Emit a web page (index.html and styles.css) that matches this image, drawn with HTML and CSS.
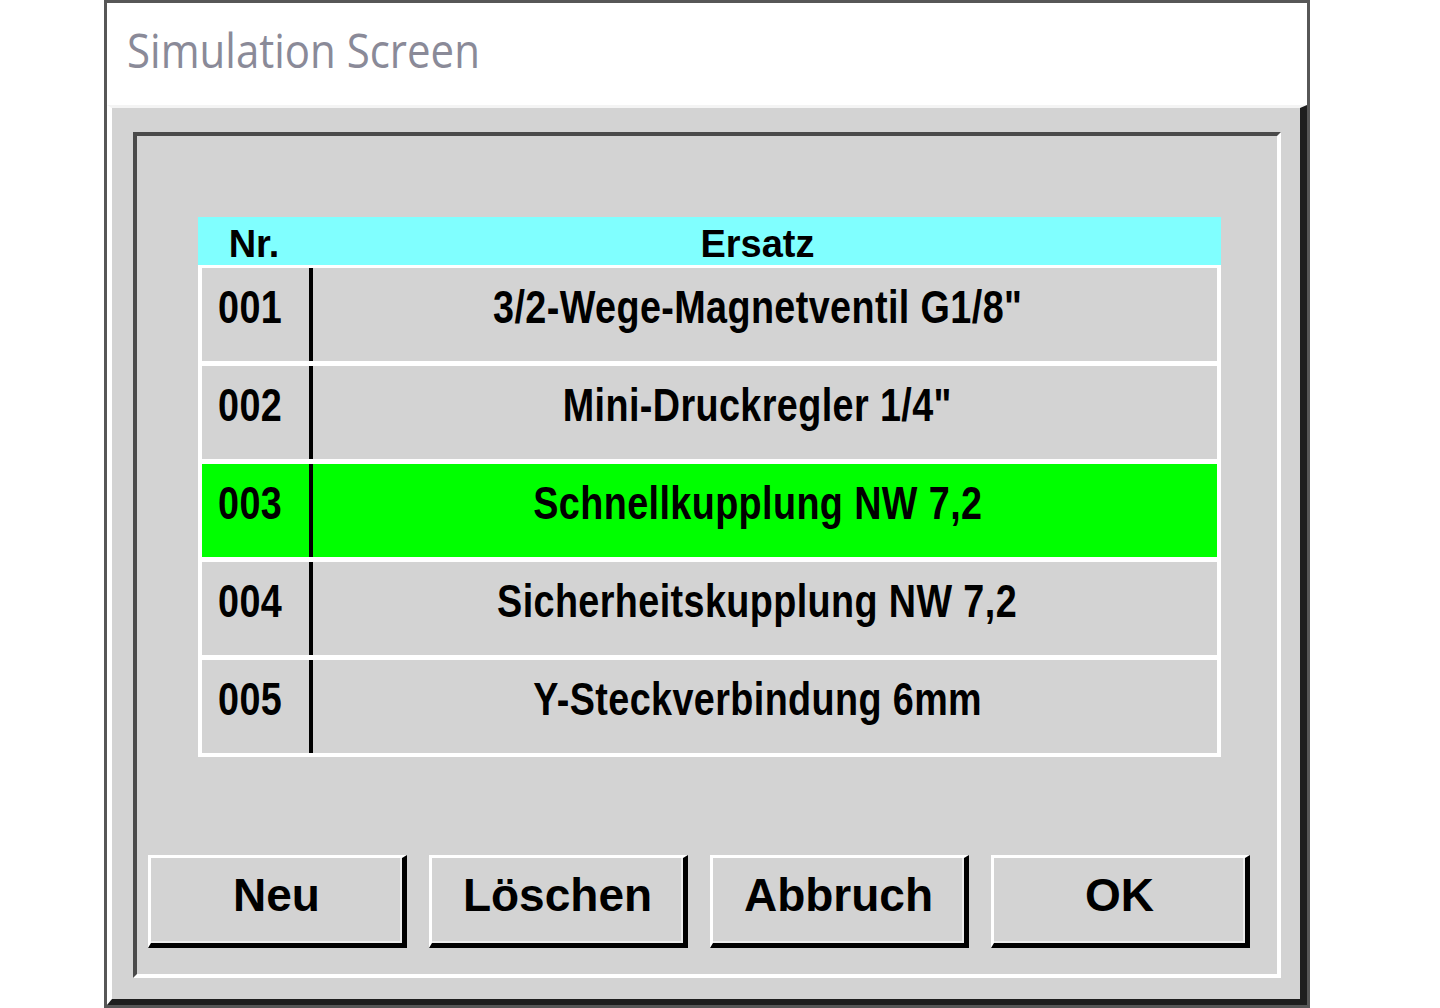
FILE: index.html
```html
<!DOCTYPE html>
<html lang="de">
<head>
    <meta charset="UTF-8">
    <meta name="viewport" content="width=device-width, initial-scale=1.0">
    <title>Simulation Screen</title>
    <link rel="stylesheet" href="styles.css">
</head>
<body>
    <div class="window">
        <div class="titlebar">
            <span class="title">Simulation Screen</span>
        </div>

        <div class="frame">
            <div class="panel">
                <!-- Ersatzteil-Liste -->
                <div class="table">
                    <div class="table-head">
                        <div class="col-nr">Nr.</div>
                        <div class="col-name">Ersatz</div>
                    </div>
                    <div class="rows">
                        <div class="row">
                            <div class="col-nr"><span class="cond">001</span></div>
                            <div class="col-name"><span class="cond">3/2-Wege-Magnetventil G1/8"</span></div>
                        </div>
                        <div class="row">
                            <div class="col-nr"><span class="cond">002</span></div>
                            <div class="col-name"><span class="cond">Mini-Druckregler 1/4"</span></div>
                        </div>
                        <div class="row selected">
                            <div class="col-nr"><span class="cond">003</span></div>
                            <div class="col-name"><span class="cond">Schnellkupplung NW 7,2</span></div>
                        </div>
                        <div class="row">
                            <div class="col-nr"><span class="cond">004</span></div>
                            <div class="col-name"><span class="cond">Sicherheitskupplung NW 7,2</span></div>
                        </div>
                        <div class="row">
                            <div class="col-nr"><span class="cond">005</span></div>
                            <div class="col-name"><span class="cond">Y-Steckverbindung 6mm</span></div>
                        </div>
                    </div>
                </div>

                <!-- Buttons -->
                <div class="buttons">
                    <button class="btn">Neu</button>
                    <button class="btn">Löschen</button>
                    <button class="btn">Abbruch</button>
                    <button class="btn">OK</button>
                </div>
            </div>
        </div>
    </div>
</body>
</html>
```

FILE: styles.css
```css
/* Simulation screen dialog */
body {
    margin: 0;
    padding: 0;
    background: #fff;
    font-family: "Liberation Sans", Arial, sans-serif;
}
.window {
    margin-left: 104px;
    width: 1200px;
    border: 3px solid #575757;
    background: #fff;
}
.titlebar {
    height: 102px;
    padding-left: 20px;
    padding-top: 10px;
    box-sizing: border-box;
}
.title {
    display: inline-block;
    font-family: "Open Sans", "Noto Sans", sans-serif;
    font-size: 42px;
    line-height: 84px;
    color: #8a8a98;
    transform: scaleY(1.12);
    transform-origin: left bottom;
}
.frame {
    border-style: solid;
    border-width: 3px 7px 6px 5px;
    border-color: #f4f4f4 #1e1e1e #1e1e1e #fff;
    background: #d3d3d3;
    padding: 24px 19px 21px 21px;
}
.panel {
    border-style: solid;
    border-width: 4px;
    border-color: #4a4a4a #fff #fff #4a4a4a;
    padding: 81px 0 26px 0;
}
.table {
    margin-left: 61px;
    width: 1023px;
    font-weight: bold;
    color: #000;
}
.table-head {
    display: flex;
    background: #80ffff;
    height: 48px;
    box-sizing: border-box;
    padding-top: 6px;
    font-size: 38px;
    line-height: 42px;
}
.table-head .col-nr {
    width: 112px;
    text-align: center;
}
.table-head .col-name {
    flex: 1;
    text-align: center;
    padding-right: 16px;
}
.rows {
    background: #fff;
    padding: 3px 4px 4px 4px;
    display: flex;
    flex-direction: column;
    gap: 5px;
}
.row {
    display: flex;
    height: 93px;
    background: #d3d3d3;
    font-size: 46px;
    line-height: 46px;
}
.row.selected {
    background: #00ff00;
}
.row .col-nr {
    width: 107px;
    padding-top: 16px;
    padding-right: 10px;
    box-sizing: border-box;
    text-align: center;
}
.row .col-name {
    flex: 1;
    border-left: 4px solid #000;
    padding-top: 16px;
    padding-right: 15px;
    text-align: center;
}
.cond {
    display: inline-block;
    letter-spacing: 0.5px;
    transform: scaleX(0.82);
}
.buttons {
    display: flex;
    gap: 22px;
    margin-top: 98px;
    margin-left: 11px;
}
.btn {
    width: 259px;
    height: 93px;
    padding: 0 0 12px 0;
    border-style: solid;
    border-width: 3px 5px 5px 3px;
    border-color: #fff #000 #000 #fff;
    box-shadow: inset -2px -2px 0 #ececec;
    background: #d3d3d3;
    font-family: "Liberation Sans", Arial, sans-serif;
    font-weight: bold;
    font-size: 46px;
    color: #000;
    cursor: pointer;
}
```
